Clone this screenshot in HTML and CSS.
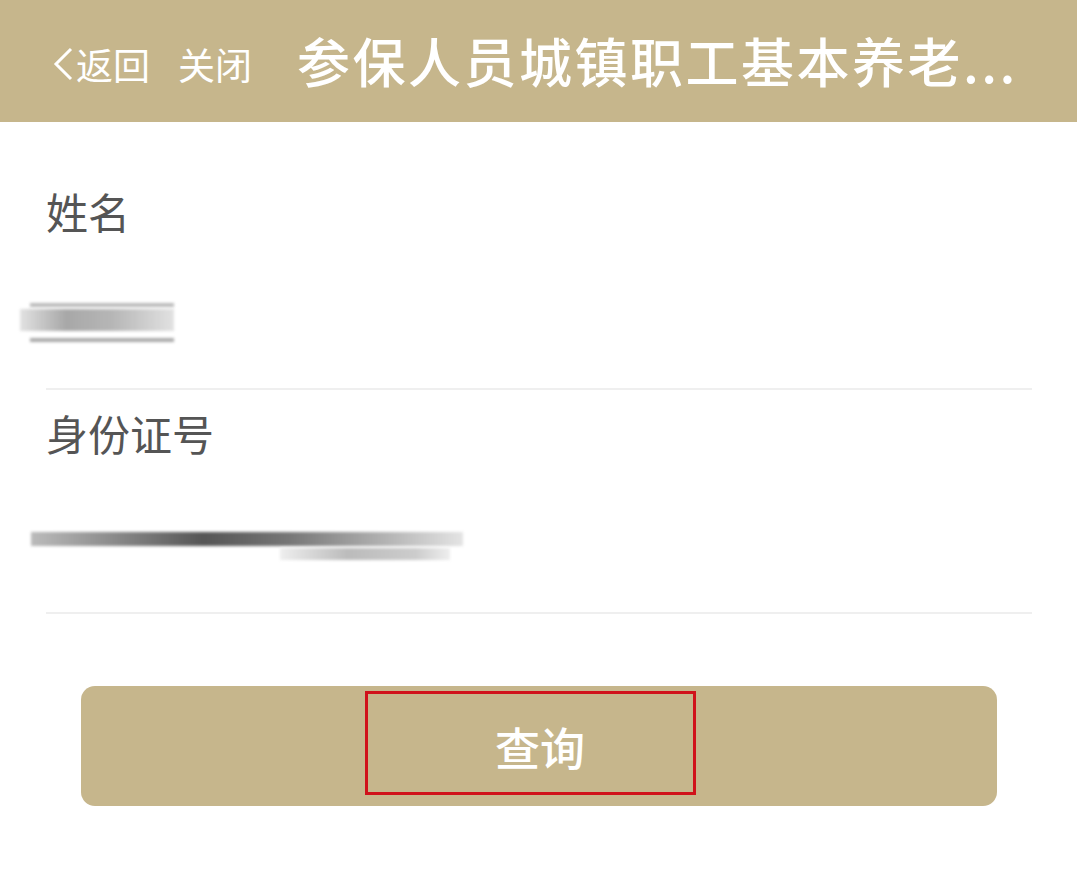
FILE: index.html
```html
<!DOCTYPE html>
<html lang="zh-CN">
<head>
<meta charset="utf-8">
<title>参保人员城镇职工基本养老保险</title>
<link rel="stylesheet" href="styles.css">
</head>
<body>
<div class="page">
  <header class="topbar">
    <div class="nav">
      <span class="back"><svg class="chev" width="22" height="36" viewBox="0 0 22 36"><path d="M19 3 L4 18 L19 33" fill="none" stroke="#fff" stroke-width="3"/></svg>返回</span>
      <span class="close">关闭</span>
    </div>
    <h1 class="title">参保人员城镇职工基本养老...</h1>
  </header>
  <main class="form">
    <div class="field">
      <div class="label">姓名</div>
      <div class="value v1"><span class="blur b1a"></span><span class="blur b1b"></span><span class="blur b1c"></span></div>
    </div>
    <div class="field second">
      <div class="label">身份证号</div>
      <div class="value v2"><span class="blur b2a"></span><span class="blur b2b"></span></div>
    </div>
    <div class="actions">
      <button class="submit"><span class="mark"></span>查询</button>
    </div>
  </main>
</div>
</body>
</html>
```
FILE: styles.css
```css
html, body { margin: 0; padding: 0; background: #fff; }
body { font-family: "Noto Sans CJK SC", "Noto Sans", sans-serif; }
.page { width: 1080px; height: 872px; overflow: hidden; }
.topbar {
  width: 1077px; height: 122px; background: #c6b68c;
  display: flex; align-items: center; box-sizing: border-box;
  padding-left: 52px; color: #fff;
}
.nav { display: flex; align-items: center; font-size: 37px; line-height: 1; padding-top: 6px; }
.back { display: flex; align-items: center; }
.chev { margin-right: 2px; }
.close { margin-left: 28px; }
.title {
  margin: 0 0 0 45px; font-size: 53px; font-weight: 500; line-height: 1;
  letter-spacing: 2.5px; white-space: nowrap; padding-bottom: 2px;
}
.form { padding: 0 48px 0 46px; }
.field { border-bottom: 2px solid #efefef; height: 268px; box-sizing: border-box; }
.field.second { height: 224px; }
.label { font-size: 42px; color: #555; line-height: 1; padding-top: 68px; }
.field.second .label { padding-top: 22px; }
.value { position: relative; height: 60px; margin-left: -46px; }
.blur { position: absolute; display: block; filter: blur(1.5px); }
.v1 { margin-top: 71px; }
.b1a { left: 20px; top: 6px; width: 154px; height: 22px; background: linear-gradient(90deg, #ddd, #999 30%, #aaa 60%, #ddd); opacity: .85; }
.b1b { left: 30px; top: 0; width: 144px; height: 4px; background: #bbb; }
.b1c { left: 30px; top: 35px; width: 144px; height: 4px; background: #aaa; }
.v2 { margin-top: 74px; }
.b2a { left: 31px; top: 4px; width: 432px; height: 14px; background: linear-gradient(90deg, #bbb, #555 40%, #777 60%, #bbb 85%, #e4e4e4); }
.b2b { left: 280px; top: 20px; width: 170px; height: 12px; background: linear-gradient(90deg, #eee, #bbb 40%, #ccc 80%, #eee); }
.actions { padding: 72px 35px 0 35px; }
.submit {
  position: relative; width: 100%; height: 120px; border: 0; border-radius: 14px;
  background: #c6b68c; color: #fff; font-family: inherit; font-size: 45px; font-weight: 500;
  display: flex; align-items: center; justify-content: center; padding: 0 0 0 2px;
}
.mark {
  position: absolute; left: 284px; top: 5px; width: 331px; height: 104px;
  border: 3px solid #d0121b; box-sizing: border-box;
}
```
